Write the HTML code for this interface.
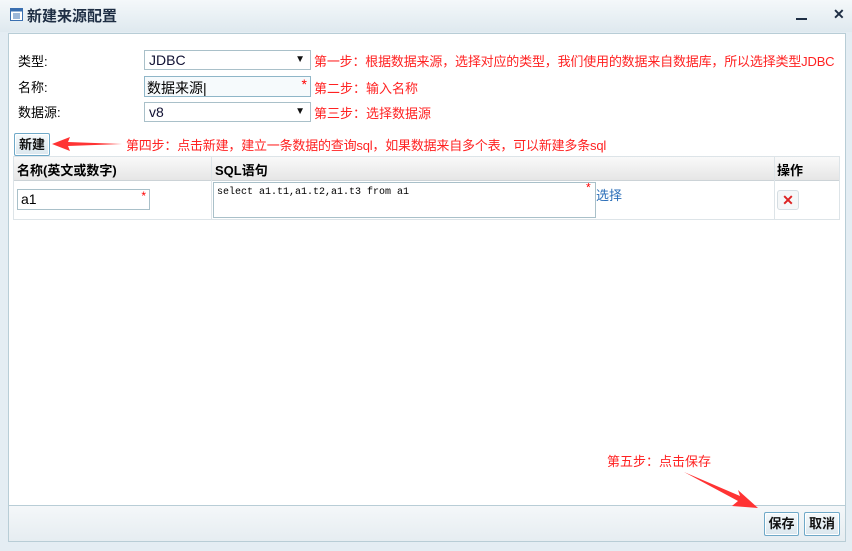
<!DOCTYPE html>
<html><head><meta charset="utf-8"><style>
*{box-sizing:border-box;margin:0;padding:0}
body{width:852px;height:551px;overflow:hidden;background:#e4edf3;font-family:"Liberation Sans","Noto Sans CJK SC",sans-serif;font-size:12px;position:relative}
.a{position:absolute}
.red{color:#f22;font-size:13px;white-space:nowrap}
.box{border:1px solid #a9c0c9;background:#fff}
.sel::after{content:"▼";position:absolute;right:5px;top:3px;font-size:10px;color:#111}
.btn{border:1px solid #6fa9c8;border-radius:2px;background:linear-gradient(#f5f9fb,#dbe7ee);font-weight:bold;font-size:12px;color:#111;text-align:center;line-height:20px;box-shadow:inset 0 0 0 1px #fff}
</style></head><body>
<div class="a" style="left:0;top:0;width:852px;height:32px;background:linear-gradient(#f4f8fa,#dfe9ef)"></div>
<svg class="a" style="left:10px;top:8px" width="13" height="13"><rect x="0.5" y="0.5" width="12" height="12" fill="#fff" stroke="#3a6fb0"/><rect x="0.5" y="0.5" width="12" height="3" fill="#3a6fb0"/><path d="M3 6h7M3 8h7M3 10h7" stroke="#3a6fb0"/></svg>
<div class="a" style="left:27px;top:5px;font-weight:bold;font-size:15px;color:#1e2e44">新建来源配置</div>
<div class="a" style="left:796px;top:18px;width:11px;height:2px;background:#1e2e44"></div>
<div class="a" style="left:833px;top:6px;font-size:14px;font-weight:bold;color:#1e2e44">✕</div>
<div class="a" style="left:8px;top:33px;width:838px;height:509px;border:1px solid #b8cdd6;background:#fff"></div>
<div class="a" style="left:9px;top:505px;width:836px;height:36px;border-top:1px solid #b8cdd6;background:linear-gradient(#f4f7f9,#e6edf1)"></div>

<div class="a" style="left:18px;top:51px;font-size:13px">类型:</div>
<div class="a" style="left:18px;top:77px;font-size:13px">名称:</div>
<div class="a" style="left:18px;top:102px;font-size:13px">数据源:</div>
<div class="a box sel" style="left:144px;top:50px;width:167px;height:20px;font-size:14px;padding:1px 4px;color:#113">JDBC</div>
<div class="a box" style="left:144px;top:76px;width:167px;height:21px;font-size:14px;padding:1px 2px;border-color:#8fb6c8;background:#f6fafc">数据来源|<span style="position:absolute;right:3px;top:-1px;color:#f00">*</span></div>
<div class="a box sel" style="left:144px;top:102px;width:167px;height:20px;font-size:14px;padding:1px 4px;color:#113">v8</div>
<div class="a red" style="left:314px;top:51px;letter-spacing:-0.18px">第一步：根据数据来源，选择对应的类型，我们使用的数据来自数据库，所以选择类型JDBC</div>
<div class="a red" style="left:314px;top:78px">第二步：输入名称</div>
<div class="a red" style="left:314px;top:103px">第三步：选择数据源</div>

<div class="a btn" style="left:14px;top:133px;width:36px;height:23px;line-height:21px;font-size:13px">新建</div>
<svg class="a" style="left:50px;top:136px" width="75" height="16"><polygon points="2,8 20,1 18,6 72,8 18,10 20,15" fill="#f33"/></svg>
<div class="a red" style="left:126px;top:135px;letter-spacing:-0.2px">第四步：点击新建，建立一条数据的查询sql，如果数据来自多个表，可以新建多条sql</div>

<div class="a" style="left:13px;top:156px;width:827px;height:64px;border:1px solid #dde4e8"></div>
<div class="a" style="left:14px;top:157px;width:825px;height:24px;background:linear-gradient(#f9f9f9,#e6e6e6);border-bottom:1px solid #ccd3d7"></div>
<div class="a" style="left:211px;top:157px;width:1px;height:62px;background:#dde4e8"></div>
<div class="a" style="left:774px;top:157px;width:1px;height:62px;background:#dde4e8"></div>
<div class="a" style="left:17px;top:160px;font-weight:bold;font-size:13px">名称(英文或数字)</div>
<div class="a" style="left:215px;top:160px;font-weight:bold;font-size:13px">SQL语句</div>
<div class="a" style="left:777px;top:160px;font-weight:bold;font-size:13px">操作</div>
<div class="a box" style="left:17px;top:189px;width:133px;height:21px;font-size:14px;padding:1px 3px">a1<span style="position:absolute;right:3px;top:-1px;color:#f00;font-size:12px">*</span></div>
<div class="a box" style="left:213px;top:182px;width:383px;height:36px;font-family:'Liberation Mono',monospace;font-size:10px;padding:4px 3px">select a1.t1,a1.t2,a1.t3 from a1<span style="position:absolute;right:3px;top:-1px;color:#f00;font-size:12px">*</span></div>
<div class="a" style="left:596px;top:185px;color:#2a6eb8;font-size:13px">选择</div>
<div class="a" style="left:777px;top:190px;width:22px;height:20px;border:1px solid #d5dde2;border-radius:3px;background:#f5f7f8;color:#d22;font-weight:bold;text-align:center;line-height:18px;font-size:14px">✕</div>

<div class="a red" style="left:607px;top:451px">第五步：点击保存</div>
<svg class="a" style="left:682px;top:468px" width="80" height="44"><polygon points="2,4 58,28 56,22 76,40 50,38 56,33" fill="#f33"/></svg>
<div class="a btn" style="left:764px;top:512px;width:35px;height:24px;line-height:22px;font-size:13px">保存</div>
<div class="a btn" style="left:804px;top:512px;width:36px;height:24px;line-height:22px;font-size:13px">取消</div>
</body></html>
